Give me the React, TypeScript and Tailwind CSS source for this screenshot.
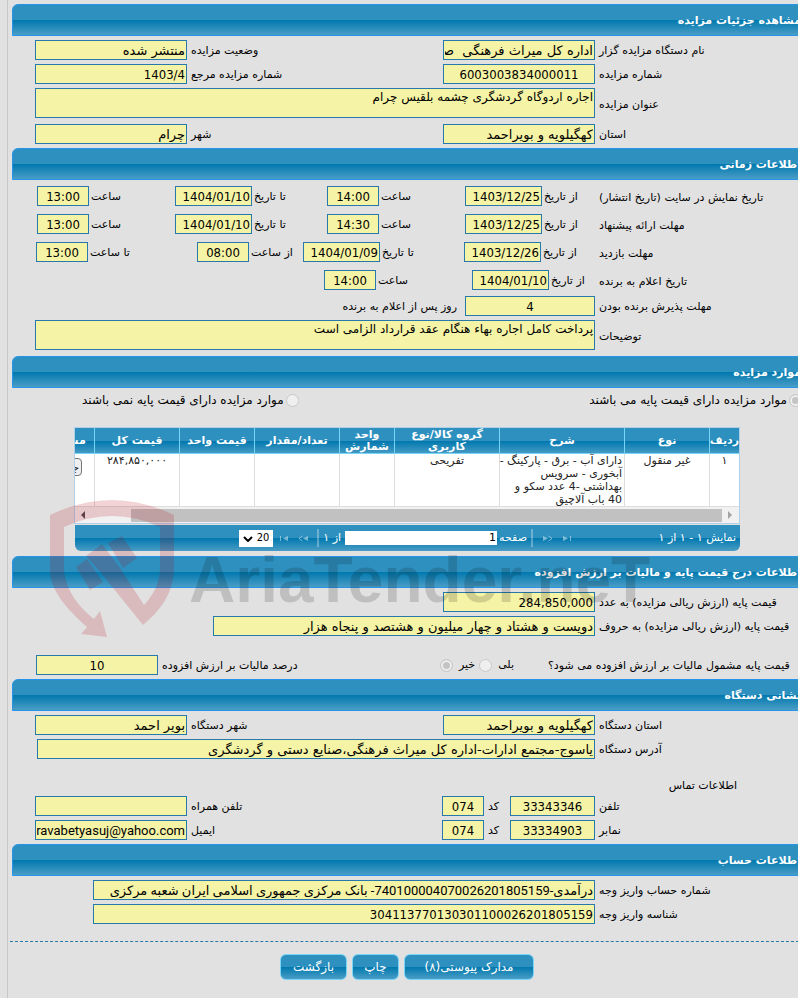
import { useId, type ReactNode } from "react";
import clsx from "clsx";

const BAR = "bg-[linear-gradient(to_bottom,#2e90bf_0%,#2e90bf_50%,#0078ae_50%,#4a9dc5_100%)]";

const COLUMNS = [
  { title: "ردیف", width: "w-[30px]" },
  { title: "نوع", width: "w-[85px]" },
  { title: "شرح", width: "w-[125px]" },
  { title: "گروه کالا/نوع کاربری", width: "w-[105px]" },
  { title: "واحد شمارش", width: "w-[55px]" },
  { title: "تعداد/مقدار", width: "w-[85px]" },
  { title: "قیمت واحد", width: "w-[75px]" },
  { title: "قیمت کل", width: "w-[85px]" },
  { title: "مشاهده", width: "w-[60px]" },
];

const CELL = "border-l border-[#dddddd] px-1 text-center";

interface FieldProps {
  label: string;
  value: string;
  className?: string;
  labelClass?: string;
  inputClass?: string;
}

// plain numbers, mixed latin text and persian text each read best in their own face
function valueFont(value: string) {
  if (/^[\d/:,]+$/.test(value)) return "font-['DejaVu_Sans_Condensed','DejaVu_Sans',sans-serif]";
  if (/[\da-z]/.test(value)) return "font-['Roboto','DejaVu_Sans',sans-serif]";
  return "font-['DejaVu_Sans',sans-serif]";
}

function Field({ label, value, className, labelClass, inputClass }: FieldProps) {
  const id = useId();
  return (
    <div className={clsx("flex items-center", className)}>
      <label htmlFor={id} className={clsx("pt-0.5 text-left whitespace-nowrap", labelClass)}>
        {label}
      </label>
      <input
        id={id}
        readOnly
        value={value}
        className={clsx("h-5 border border-[#2779aa] bg-[#f5f3a5] px-px text-[13px]", valueFont(value), inputClass)}
      />
    </div>
  );
}

// label in the first column, value box next to it
function MainField({ inputClass = "w-[152px]", className, ...rest }: FieldProps) {
  return <Field {...rest} className={className} labelClass="w-[203px] shrink-0 pl-1" inputClass={inputClass} />;
}

function SideField({ inputClass = "w-[152px]", ...rest }: FieldProps) {
  return <Field {...rest} className="flex-1" labelClass="flex-1 pl-1" inputClass={inputClass} />;
}

function DateField({ label, value }: FieldProps) {
  return <Field label={label} value={value} className="justify-end gap-0.5" inputClass="w-[77px]" />;
}

function TimeField({ label, value }: FieldProps) {
  return <Field label={label} value={value} className="justify-end gap-0.5" inputClass="w-[52px] text-center" />;
}

function TextField({ label, value }: FieldProps) {
  const id = useId();
  return (
    <div className="flex items-center pl-[35px]">
      <label htmlFor={id} className="w-[203px] shrink-0 pt-1 pl-1 text-left">
        {label}
      </label>
      <textarea
        id={id}
        readOnly
        value={value}
        className="block h-[30px] flex-1 resize-none overflow-hidden border border-[#2779aa] bg-[#f5f3a5] px-px text-[12px] leading-4"
      />
    </div>
  );
}

function Radio({ label, name, checked = false, before = false }: { label: string; name: string; checked?: boolean; before?: boolean }) {
  return (
    <label className={clsx("flex items-center whitespace-nowrap", before ? "flex-row-reverse gap-1.5" : "gap-0.5 text-[12px]")}>
      <input
        type="radio"
        name={name}
        disabled
        defaultChecked={checked}
        className="size-[13px] shrink-0 appearance-none rounded-full border border-[#c9c9c9] bg-[#efefef] checked:bg-[#c4c4c4] checked:shadow-[inset_0_0_0_2px_#eeeeee]"
      />
      {label}
    </label>
  );
}

function Section({ title, children }: { title: string; children: ReactNode }) {
  return (
    <section>
      <h2 className={clsx("-mr-2 ml-1 flex h-8 items-center rounded-t-md border border-[#2694e8] pt-0.5 pr-1 font-bold text-white", BAR)}>
        {title}
      </h2>
      {children}
    </section>
  );
}

function PagerIcon({ label, bar = false, flip = false }: { label: string; bar?: boolean; flip?: boolean }) {
  return (
    <button type="button" disabled aria-label={label} className="flex w-3 justify-center text-white/45">
      <svg width="11" height="7" viewBox="0 0 11 7" className={clsx(flip && "-scale-x-100")}>
        <path d="M1 1v5l5-2.5z" fill="currentColor" />
        {bar ? (
          <path d="M8.500 1v5" stroke="currentColor" />
        ) : (
          <path d="M6.500 1l3.500 2.500L6.500 6" fill="none" stroke="currentColor" />
        )}
      </svg>
    </button>
  );
}

function ItemsGrid() {
  return (
    <div className="mt-[19px] mr-[58px] ml-[66px]">
      <div className="overflow-hidden border border-[#aed0ea] bg-white">
        <table className="w-[705px] table-fixed border-separate border-spacing-0">
          <thead>
            <tr className={clsx("h-[26px] leading-3 text-white", BAR)}>
              {COLUMNS.map((c) => (
                <th key={c.title} className={clsx("border-b border-l border-[#77d5f7] font-bold", c.width)}>
                  {c.title}
                </th>
              ))}
            </tr>
          </thead>
          <tbody>
            <tr className="h-[52px] align-top leading-[13px] text-[#222222]">
              <td className={CELL}>۱</td>
              <td className={CELL}>غیر منقول</td>
              <td className="border-l border-[#dddddd] pr-0.5 text-right whitespace-nowrap">
                دارای آب - برق - پارکینگ -<br />
                آبخوری - سرویس
                <br />
                بهداشتی -4 عدد سکو و<br />
                40 باب آلاچیق
              </td>
              <td className={CELL}>تفریحی</td>
              <td className={CELL} />
              <td className={CELL} />
              <td className={CELL} />
              <td className={CELL}>۲۸۴,۸۵۰,۰۰۰</td>
              <td className="pt-1 pr-3 text-right">
                <button type="button" className="h-[18px] rounded-sm border border-[#767676] bg-[#efefef] px-0.5">
                  جزئیات
                </button>
              </td>
            </tr>
          </tbody>
        </table>
        <div className="flex h-[17px] items-center justify-between border-t border-[#dddddd] bg-[#f1f1f1] px-1">
          <svg width="12" height="8" viewBox="0 0 12 8">
            <path d="M5 0v8l4-4z" fill="#a3a3a3" />
          </svg>
          <div className="mr-px ml-11 h-[13px] flex-1 bg-[#c1c1c1]" />
          <svg width="8" height="8" viewBox="0 0 8 8">
            <path d="M6 0v8L2 4z" fill="#505050" />
          </svg>
        </div>
      </div>
      <div className={clsx("mt-px ml-px flex h-[26px] items-center rounded-b-md text-white", BAR)}>
        <span className="w-[167px] pr-1">نمایش ۱ - ۱ از ۱</span>
        <div className="flex flex-1 items-center gap-2">
          <PagerIcon label="آخرین" bar />
          <PagerIcon label="بعدی" />
          <span className="h-[18px] w-0.5 bg-white/30" />
          <label className="-mr-1 flex items-center gap-0.5">
            صفحه
            <input readOnly value="1" className="h-[14px] w-[152px] bg-white px-px text-black" />
          </label>
          <span className="-mr-1">از ۱</span>
          <span className="-mr-1 h-[18px] w-0.5 bg-white/30" />
          <PagerIcon label="قبلی" flip />
          <PagerIcon label="اولین" bar flip />
          <span className="relative -mr-1">
            <select
              aria-label="تعداد در صفحه"
              className="block h-[17px] w-[34px] appearance-none bg-white pr-1 font-['DejaVu_Sans_Condensed',sans-serif] text-black"
            >
              <option>20</option>
            </select>
            <svg width="10" height="6" viewBox="0 0 10 6" className="pointer-events-none absolute top-1.5 left-1">
              <path d="M1 1l4 4 4-4" fill="none" stroke="#000" strokeWidth="2" />
            </svg>
          </span>
        </div>
      </div>
    </div>
  );
}

function Watermark() {
  return (
    <div aria-hidden="true" dir="ltr" className="pointer-events-none absolute top-[500px] left-[50px] flex">
      <svg width="125" height="138" viewBox="0 0 125 138" fill="#b40014" fillOpacity="0.17">
        <path d="M0 15Q62-15 124 15V70C123 94 110 111 93 125L51 73 36 56 52 44 70 68 94 105C104 94 109 84 110 70V27Q62 5 14 27V70C16 91 29 107 44 119L50 111 57 137 31 134 37 127C16 108 0 90 0 70Z" />
        <path d="M26 67l11-8 16 23-13 8zM58 43l14-7 15 22-14 10z" />
      </svg>
      <span className="pt-7 pl-3.5 font-['Liberation_Sans',sans-serif] text-[64px] leading-[104px] font-bold text-black/15">
        AriaTender.neT
      </span>
    </div>
  );
}

function ActionButton({ children, className }: { children: ReactNode; className: string }) {
  return (
    <button type="button" className={clsx("h-[26px] rounded-md border border-[#77d5f7] text-[12px] text-white", BAR, className)}>
      {children}
    </button>
  );
}

export default function App() {
  return (
    <div
      dir="rtl"
      className="relative min-h-screen overflow-hidden bg-[#e1e1e1] font-['DejaVu_Sans',sans-serif] text-[11px] leading-4 text-black"
    >
      <main className="ml-[7px] min-h-screen border-l border-[#c8c8c8] pt-1">
        <Section title="مشاهده جزئیات مزایده">
          <div className="flex flex-col gap-1 py-1 *:-ml-2 *:pl-[35px]">
            <div className="flex">
              <MainField label="نام دستگاه مزایده گزار" value="اداره کل میراث فرهنگی  صنایع دستی و گردشگری" />
              <SideField label="وضعیت مزایده" value="منتشر شده" />
            </div>
            <div className="flex">
              <MainField label="شماره مزایده" value="6003003834000011" inputClass="w-[152px] text-center" />
              <SideField label="شماره مزایده مرجع" value="1403/4" />
            </div>
            <TextField label="عنوان مزایده" value="اجاره اردوگاه گردشگری چشمه بلقیس چرام" />
            <div className="flex pt-0.5">
              <MainField label="استان" value="کهگیلویه و بویراحمد" />
              <SideField label="شهر" value="چرام" />
            </div>
          </div>
        </Section>

        <Section title="اطلاعات زمانی">
          <div className="pt-1.5 pb-1.5 *:-ml-2">
            <div className="grid h-7 grid-cols-[199px_134fr_138fr_152fr_138fr] items-start pl-[37px]">
              <span className="pt-1 text-left">تاریخ نمایش در سایت (تاریخ انتشار)</span>
              <DateField label="از تاریخ" value="1403/12/25" />
              <TimeField label="ساعت" value="14:00" />
              <DateField label="تا تاریخ" value="1404/01/10" />
              <TimeField label="ساعت" value="13:00" />
            </div>
            <div className="grid h-7 grid-cols-[199px_134fr_138fr_152fr_138fr] items-start pl-[37px]">
              <span className="pt-1 text-left">مهلت ارائه پیشنهاد</span>
              <DateField label="از تاریخ" value="1403/12/25" />
              <TimeField label="ساعت" value="14:30" />
              <DateField label="تا تاریخ" value="1404/01/10" />
              <TimeField label="ساعت" value="13:00" />
            </div>
            <div className="grid h-7 grid-cols-[199px_135fr_161fr_106fr_161fr] items-start pl-[36px]">
              <span className="pt-1 text-left">مهلت بازدید</span>
              <DateField label="از تاریخ" value="1403/12/26" />
              <DateField label="تا تاریخ" value="1404/01/09" />
              <TimeField label="از ساعت" value="08:00" />
              <TimeField label="تا ساعت" value="13:00" />
            </div>
            <div className="grid h-[26px] grid-cols-[199px_127fr_148fr_288fr] items-start pl-[36px]">
              <span className="pt-1 text-left">تاریخ اعلام به برنده</span>
              <DateField label="از تاریخ" value="1404/01/10" />
              <TimeField label="ساعت" value="14:00" />
            </div>
            <div className="mb-1 flex items-center gap-2">
              <MainField label="مهلت پذیرش برنده بودن" value="4" inputClass="w-[130px] text-center" />
              <span className="pt-0.5">روز پس از اعلام به برنده</span>
            </div>
            <TextField label="توضیحات" value="پرداخت کامل اجاره بهاء هنگام عقد قرارداد الزامی است" />
          </div>
        </Section>

        <Section title="موارد مزایده">
          <div className="-mr-1 -ml-2 flex justify-between pt-1 pl-[82px]">
            <Radio name="base-price" label="موارد مزایده دارای قیمت پایه می باشند" checked />
            <Radio name="base-price" label="موارد مزایده دارای قیمت پایه نمی باشند" />
          </div>
          <ItemsGrid />
        </Section>

        <div className="h-[5px]" />
        <Section title="اطلاعات درج قیمت پایه و مالیات بر ارزش افزوده">
          <div className="flex flex-col gap-1 pt-1 pb-1 *:-ml-2">
            <MainField label="قیمت پایه (ارزش ریالی مزایده) به عدد" value="284,850,000" />
            <MainField
              label="قیمت پایه (ارزش ریالی مزایده) به حروف"
              value="دویست و هشتاد و چهار میلیون و هشتصد و پنجاه هزار"
              className="pl-[213px]"
              inputClass="min-w-0 flex-1"
            />
            <div className="flex items-center pt-[15px] pl-[36px]">
              <div className="-mr-2 flex w-[258px] shrink-0 justify-end pt-0.5 whitespace-nowrap">
                قیمت پایه مشمول مالیات بر ارزش افزوده می شود؟
              </div>
              <div className="flex gap-1 pr-[34px]">
                <Radio name="vat" label="بلی" before />
                <Radio name="vat" label="خیر" checked before />
              </div>
              <SideField label="درصد مالیات بر ارزش افزوده" value="10" inputClass="w-[122px] text-center" />
            </div>
          </div>
        </Section>

        <Section title="نشانی دستگاه">
          <div className="flex flex-col gap-1 py-1 *:-ml-2">
            <div className="flex pl-[35px]">
              <MainField label="استان دستگاه" value="کهگیلویه و بویراحمد" />
              <SideField label="شهر دستگاه" value="بویر احمد" />
            </div>
            <MainField
              label="آدرس دستگاه"
              value="یاسوج-مجتمع ادارات-اداره کل میراث فرهنگی،صنایع دستی و گردشگری"
              className="pl-[37px]"
              inputClass="min-w-0 flex-1"
            />
            <h3 className="pt-[17px] pr-[61px] leading-3">اطلاعات تماس</h3>
            <div className="flex pl-[35px]">
              <MainField label="تلفن" value="33343346" inputClass="w-[85px] text-center" />
              <Field label="کد" value="074" className="w-[68px] justify-end gap-1" inputClass="w-[42px] text-center" />
              <SideField label="تلفن همراه" value="" />
            </div>
            <div className="flex pl-[35px]">
              <MainField label="نمابر" value="33334903" inputClass="w-[85px] text-center" />
              <Field label="کد" value="074" className="w-[68px] justify-end gap-1" inputClass="w-[42px] text-center" />
              <SideField label="ایمیل" value="ravabetyasuj@yahoo.com" />
            </div>
          </div>
        </Section>

        <Section title="اطلاعات حساب">
          <div className="flex flex-col gap-1 pt-1 *:-ml-2">
            <MainField
              label="شماره حساب واریز وجه"
              value="درآمدی-740100004070026201805159- بانک مرکزی جمهوری اسلامی ایران شعبه مرکزی"
              className="pl-[93px]"
              inputClass="min-w-0 flex-1"
            />
            <MainField
              label="شناسه واریز وجه"
              value="304113770130301100026201805159"
              className="pl-[93px]"
              inputClass="min-w-0 flex-1"
            />
          </div>
        </Section>

        <div className="mt-[17px] -mr-1.5 ml-0.5 flex justify-center gap-[5px] border-t border-dashed border-[#2779aa] pt-3">
          <ActionButton className="w-[130px]">مدارک پیوستی(۸)</ActionButton>
          <ActionButton className="w-[47px]">چاپ</ActionButton>
          <ActionButton className="w-[67px]">بازگشت</ActionButton>
        </div>
      </main>
      <Watermark />
    </div>
  );
}
